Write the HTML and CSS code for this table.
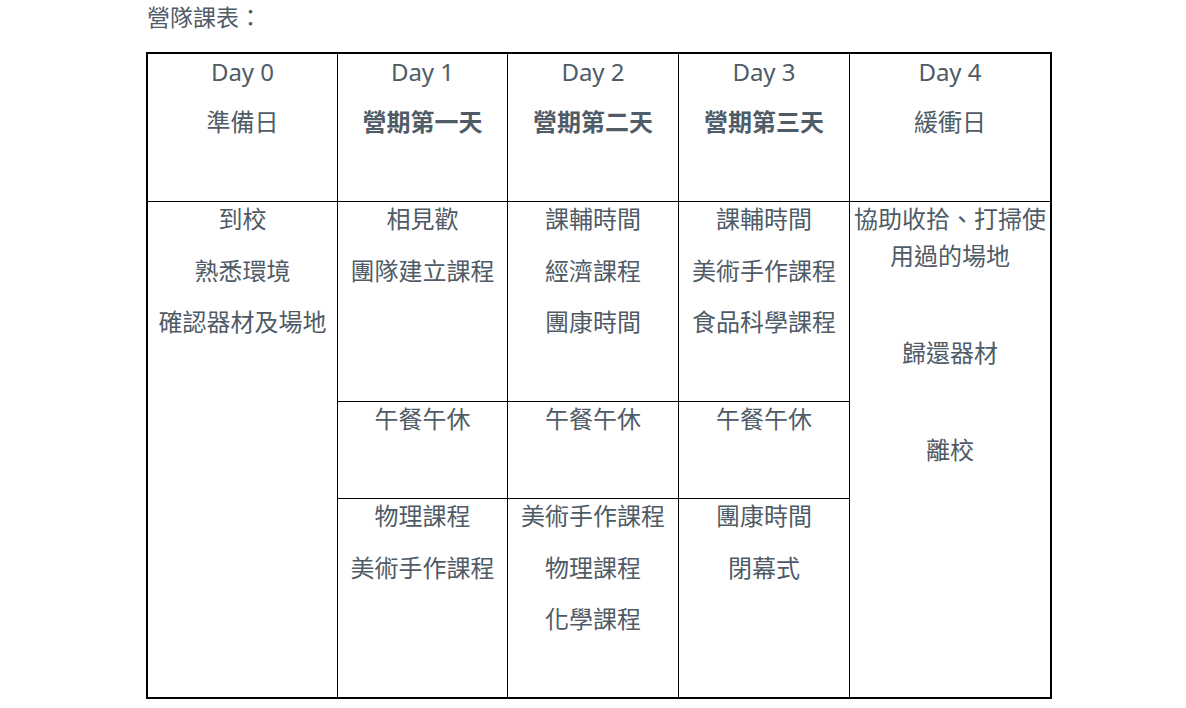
FILE: index.html
```html
<!DOCTYPE html>
<html lang="zh-Hant">
<head>
<meta charset="utf-8">
<title>營隊課表</title>
<link rel="stylesheet" href="styles.css">
</head>
<body>
<div class="page">
  <div class="title">營隊課表：</div>
  <div class="schedule">
    <div class="cell head"><p>Day 0</p><p>準備日</p></div>
    <div class="cell head"><p>Day 1</p><p class="b">營期第一天</p></div>
    <div class="cell head"><p>Day 2</p><p class="b">營期第二天</p></div>
    <div class="cell head"><p>Day 3</p><p class="b">營期第三天</p></div>
    <div class="cell head"><p>Day 4</p><p>緩衝日</p></div>

    <div class="cell c1"><p>到校</p><p>熟悉環境</p><p>確認器材及場地</p></div>
    <div class="cell"><p>相見歡</p><p>團隊建立課程</p></div>
    <div class="cell"><p>課輔時間</p><p>經濟課程</p><p>團康時間</p></div>
    <div class="cell"><p>課輔時間</p><p>美術手作課程</p><p>食品科學課程</p></div>
    <div class="cell c5"><p>協助收拾、打掃使用過的場地</p><div class="spacer"></div><p>歸還器材</p><div class="spacer"></div><p>離校</p></div>

    <div class="cell"><p>午餐午休</p></div>
    <div class="cell"><p>午餐午休</p></div>
    <div class="cell"><p>午餐午休</p></div>

    <div class="cell"><p>物理課程</p><p>美術手作課程</p></div>
    <div class="cell"><p>美術手作課程</p><p>物理課程</p><p>化學課程</p></div>
    <div class="cell"><p>團康時間</p><p>閉幕式</p></div>
  </div>
</div>
</body>
</html>
```

FILE: styles.css
```css
html, body {
  margin: 0;
  padding: 0;
  background: #ffffff;
}

body {
  font-family: "Noto Sans", "Noto Sans CJK TC", sans-serif;
  color: #4f5b66;
}

.page {
  padding-left: 146px;
}

.title {
  font-size: 23px;
  line-height: 30px;
  padding-top: 2px;
  height: 31px;
  margin: 0 0 19px 1px;
}

.schedule {
  width: 902px;
  border: 2px solid #000;
  background: #000;
  display: grid;
  grid-template-columns: 189px 169px 170px 170px 200px;
  grid-template-rows: 147px 199px 96px 198px;
  gap: 1px;
}

.cell {
  background: #fff;
  padding: 0 2px;
  text-align: center;
  font-size: 24px;
  line-height: 37px;
}

.cell p {
  margin: 0 0 14.5px;
}

.cell p:first-child {
  margin-top: -2px;
}

.cell.head p {
  margin-bottom: 13px;
}

.cell.head p:first-child {
  margin-top: -1px;
}

.cell p.b {
  font-weight: 700;
}

.c1 {
  grid-column: 1;
  grid-row: 2 / 5;
}

.c5 {
  grid-column: 5;
  grid-row: 2 / 5;
}

.spacer {
  height: 31px;
  margin-bottom: 14.5px;
}
```
